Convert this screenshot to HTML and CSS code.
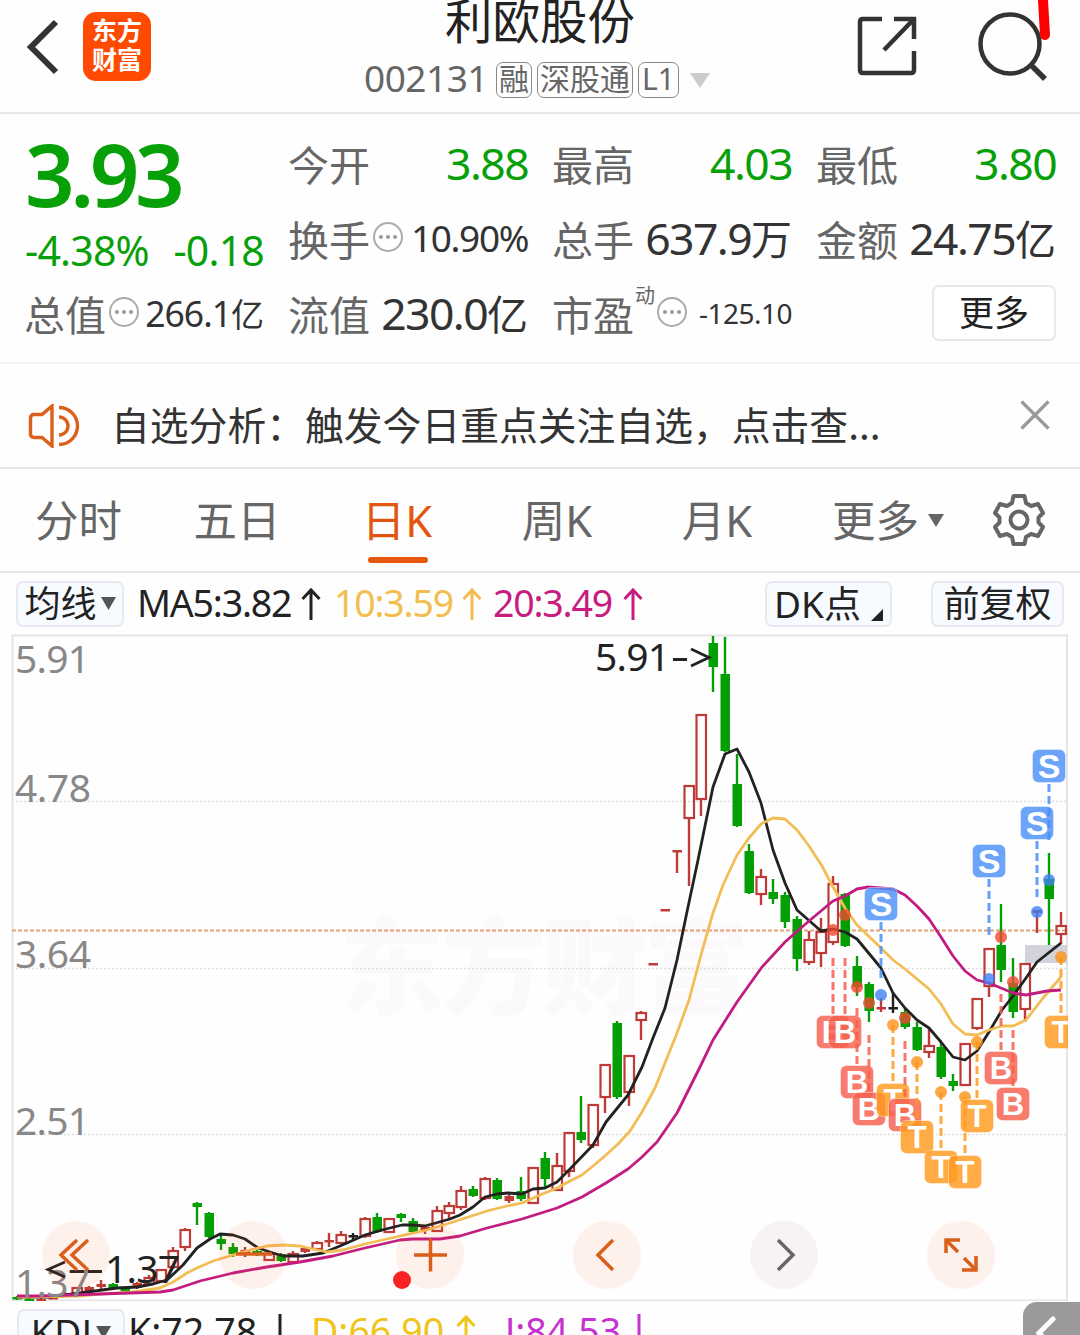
FILE: index.html
```
<!DOCTYPE html>
<html lang="zh-CN">
<head>
    <meta charset="UTF-8">
    <meta name="viewport" content="width=device-width, initial-scale=1.0">
    <title>利欧股份 002131</title>
    <link rel="stylesheet" href="styles.css">
    <script src="chart.js" defer></script>
</head>
<body>
    <div class="page">
        <!-- 顶部导航 -->
        <header class="header">
            <div class="header-left">
                <svg class="icon-back" width="34" height="58" viewBox="0 0 34 58"><path d="M30 4 5 29 30 54" fill="none" stroke="#333" stroke-width="6"/></svg>
                <div class="logo"><span>东方</span><span>财富</span></div>
            </div>
            <div class="header-title">
                <h1>利欧股份</h1>
                <div class="sub">
                    <span class="code">002131</span>
                    <span class="tag">融</span>
                    <span class="tag">深股通</span>
                    <span class="tag tag-l1">L1</span>
                    <svg class="sub-arrow" width="22" height="15" viewBox="0 0 22 15"><path d="M1 0H21L11 15Z" fill="#ccc"/></svg>
                </div>
            </div>
            <div class="header-right">
                <svg width="60" height="60" viewBox="0 0 60 60" fill="none" stroke="#333" stroke-width="4.5"><path d="M25 3H6Q3 3 3 6V54Q3 57 6 57H54Q57 57 57 54V35M37 3H57V23M57 3 27 34"/></svg>
                <svg width="72" height="72" viewBox="0 0 72 72" fill="none" stroke="#333" stroke-width="4.5"><circle cx="33" cy="34" r="29.5"/><path d="M54 55 68 69" stroke-width="5.5"/></svg>
            </div>
            <svg class="pen-mark" width="14" height="42" viewBox="0 0 14 42"><path d="M6 0 8 35" stroke="#f00" stroke-width="10" stroke-linecap="round"/></svg>
        </header>

        <!-- 行情 -->
        <section class="quote">
            <div class="price-box">
                <div class="price">3.93</div>
                <div class="change"><span>-4.38%</span><span>-0.18</span></div>
            </div>
            <div class="cell"><label>今开</label><b class="num down">3.88</b></div>
            <div class="cell"><label>最高</label><b class="num down">4.03</b></div>
            <div class="cell"><label>最低</label><b class="num down">3.80</b></div>
            <div class="cell"><label>换手</label><i class="info"></i><b class="num mid">10.90%</b></div>
            <div class="cell"><label>总手</label><b class="num">637.9<em>万</em></b></div>
            <div class="cell"><label>金额</label><b class="num">24.75<em>亿</em></b></div>
            <div class="cell"><label>总值</label><i class="info"></i><b class="num small">266.1<em>亿</em></b></div>
            <div class="cell"><label>流值</label><b class="num">230.0<em>亿</em></b></div>
            <div class="cell"><label>市盈</label><sup>动</sup><i class="info"></i><b class="num tiny">-125.10</b></div>
            <div class="cell cell-more"><button class="btn-more">更多</button></div>
        </section>

        <!-- 提示条 -->
        <section class="notice">
            <svg class="icon-speaker" width="52" height="44" viewBox="0 0 52 44" fill="none" stroke="#dd5f1c" stroke-width="3.4"><path d="M24 2V42L14 33.500H6Q2.500 33.500 2.500 30V14Q2.500 10.500 6 10.500H14Z"/><path d="M31 13A9 9 0 0 1 31 31M31 3.500A18.500 18.500 0 0 1 31 40.500"/></svg>
            <p>自选分析：触发今日重点关注自选，点击查...</p>
            <svg class="icon-close" width="30" height="30" viewBox="0 0 30 30"><path d="M1.500 1.500 28.500 28.500M28.500 1.500 1.500 28.500" stroke="#999" stroke-width="3.2"/></svg>
        </section>

        <!-- 周期 -->
        <nav class="tabs">
            <a class="tab">分时</a>
            <a class="tab">五日</a>
            <a class="tab active">日K</a>
            <a class="tab">周K</a>
            <a class="tab">月K</a>
            <a class="tab-more">更多<svg width="16" height="13" viewBox="0 0 16 13"><path d="M0 0H16L8 13Z" fill="#666"/></svg></a>
            <svg class="icon-gear" width="52" height="54" viewBox="0 0 52 54" fill="none" stroke="#666" stroke-width="4"><path d="M20.500 3H31.500L33 10 38 13 45 11 50 20 45.500 24.500V29.500L50 34 45 43 38 41 33 44 31.500 51H20.500L19 44 14 41 7 43 2 34 6.500 29.500V24.500L2 20 7 11 14 13 19 10Z" stroke-linejoin="round"/><circle cx="26" cy="27" r="8.500"/></svg>
        </nav>

        <!-- 均线 -->
        <div class="legend">
            <button class="chip chip-ma">均线<svg width="15" height="13" viewBox="0 0 15 13"><path d="M0 0H15L7.500 13Z" fill="#555"/></svg></button>
            <span class="ma ma5">MA5:3.82</span>
            <svg class="up" width="20" height="34" viewBox="0 0 20 34"><path d="M10 33V3M1.500 12 10 3 18.500 12" fill="none" stroke="#222" stroke-width="3"/></svg>
            <span class="ma ma10">10:3.59</span>
            <svg class="up" width="20" height="34" viewBox="0 0 20 34"><path d="M10 33V3M1.500 12 10 3 18.500 12" fill="none" stroke="#f3bd4f" stroke-width="3"/></svg>
            <span class="ma ma20">20:3.49</span>
            <svg class="up" width="20" height="34" viewBox="0 0 20 34"><path d="M10 33V3M1.500 12 10 3 18.500 12" fill="none" stroke="#c71d80" stroke-width="3"/></svg>
            <button class="chip chip-dk">DK点<svg width="12" height="12" viewBox="0 0 12 12"><path d="M12 0V12H0Z" fill="#222"/></svg></button>
            <button class="chip chip-fq">前复权</button>
        </div>

        <!-- K线图 -->
        <div class="chart">
            <svg id="kline" width="1080" height="667" viewBox="0 634 1080 667">
                <defs><clipPath id="frame"><rect x="12" y="634" width="1056" height="667"/></clipPath></defs>
                <text class="watermark" x="339" y="1006" textLength="410">东方财富</text>
                <g class="grid">
                    <path d="M12 801.500H1067M12 968.500H1067M12 1134.500H1067"/>
                </g>
                <rect class="border" x="12.500" y="635.500" width="1054.500" height="665"/>
                <path class="last-price" d="M12 930.500H1067"/>
                <rect x="1025" y="945" width="42" height="18" fill="#d2d2da"/>
                <g id="candles"></g>
                <g id="lines"></g>
                <g id="marks" clip-path="url(#frame)"></g>
                <g class="axis">
                    <text x="15" y="673" textLength="75">5.91</text>
                    <text x="15" y="802" textLength="76">4.78</text>
                    <text x="15" y="968" textLength="76">3.64</text>
                    <text x="15" y="1135" textLength="75">2.51</text>
                    <text x="15" y="1297" textLength="75">1.37</text>
                </g>
                <text class="peak" x="595" y="671" textLength="75">5.91</text>
                <path class="pointer" d="M673 659.500H687M691 649 709 657.500 691 666"/>
                <text class="peak" x="105" y="1283" textLength="75">1.37</text>
                <path class="pointer" d="M65 1262 48 1269.500 65 1277M70 1271.500H84M88 1271.500H102"/>
            </svg>
            <div class="tools">
                <span class="tool"><svg width="40" height="40" viewBox="0 0 40 40"><path d="M21 5 5 20 21 35M32 5 16 20 32 35"/></svg></span>
                <span class="tool"><svg width="40" height="40" viewBox="0 0 40 40"><path d="M3 19H39"/></svg></span>
                <span class="tool"><svg width="40" height="40" viewBox="0 0 40 40"><path d="M4 20H37M20.500 3.500V36.500"/></svg></span>
                <span class="tool"><svg width="40" height="40" viewBox="0 0 40 40"><path d="M26 5 11 20 26 35"/></svg></span>
                <span class="tool tool-off"><svg width="40" height="40" viewBox="0 0 40 40"><path d="M14 5 29 20 14 35"/></svg></span>
                <span class="tool"><svg width="40" height="40" viewBox="0 0 40 40"><path d="M5 18V5H19M5 5 17 17M35 21V35H21M35 35 23 23"/></svg></span>
            </div>
            <i class="red-dot"></i>
        </div>

        <!-- KDJ -->
        <div class="legend legend-kdj">
            <button class="chip chip-kdj">KDJ<svg width="15" height="13" viewBox="0 0 15 13"><path d="M0 0H15L7.500 13Z" fill="#555"/></svg></button>
            <span class="ma k">K:72.78</span>
            <svg class="up" width="20" height="34" viewBox="0 0 20 34"><path d="M10 0V31M1.500 23 10 31 18.500 23" fill="none" stroke="#222" stroke-width="3"/></svg>
            <span class="ma d">D:66.90</span>
            <svg class="up" width="20" height="34" viewBox="0 0 20 34"><path d="M10 33V3M1.500 12 10 3 18.500 12" fill="none" stroke="#f0c419" stroke-width="3"/></svg>
            <span class="ma j">J:84.53</span>
            <svg class="up" width="20" height="34" viewBox="0 0 20 34"><path d="M10 0V31M1.500 23 10 31 18.500 23" fill="none" stroke="#c532d0" stroke-width="3"/></svg>
            <span class="fold"><svg width="24" height="40" viewBox="0 0 24 40"><path d="M19 4 5 18 19 32" fill="none" stroke="#fff" stroke-width="5" stroke-linecap="round"/></svg></span>
        </div>
    </div>
</body>
</html>
```

FILE: styles.css
```
* {
    box-sizing: border-box;
}

body {
    margin: 0;
    background-color: #fefefe;
    font-family: "Noto Sans", "Noto Sans CJK SC", sans-serif;
    color: #333;
}

svg {
    display: block;
    flex: none;
}

.page {
    width: 1080px;
    height: 1335px;
    overflow: hidden;
}

button {
    font-family: inherit;
    padding: 0;
    color: #222;
}

/* 顶部导航 */
.header {
    position: relative;
    display: grid;
    grid-template-columns: 300px 1fr 300px;
    height: 114px;
    border-bottom: 2px solid #e7e6ec;
}

.header-left {
    display: flex;
    align-items: flex-start;
    padding: 12px 0 0 26px;
}

.icon-back {
    margin-top: 6px;
}

.logo {
    display: flex;
    flex-direction: column;
    align-items: center;
    justify-content: center;
    width: 68px;
    height: 69px;
    margin-left: 23px;
    padding-bottom: 3px;
    border-radius: 13px;
    background-color: #ff4a03;
    color: #fff;
    font-size: 25px;
    font-weight: 700;
    line-height: 29px;
}

.header-title {
    display: flex;
    flex-direction: column;
    align-items: center;
}

.header-title h1 {
    margin: -6px 0 0;
    font-size: 47.5px;
    font-weight: 400;
    line-height: 54px;
    color: #222;
}

.sub {
    display: flex;
    align-items: center;
    height: 36px;
    margin: 14px 5px 0 0;
    gap: 5px;
    color: #666;
}

.code {
    font-size: 37px;
    line-height: 36px;
    letter-spacing: -0.5px;
    margin: -4px 3px 0 0;
}

.tag {
    height: 36px;
    padding: 0 2px;
    border: 1.5px solid #888;
    border-radius: 7px;
    font-size: 30px;
    line-height: 32px;
}

.tag-l1 {
    width: 41px;
    text-align: center;
}

.sub-arrow {
    margin-left: 5px;
}

.header-right {
    display: flex;
    align-items: flex-start;
    gap: 60px;
    padding: 16px 0 0 77px;
}

.header-right svg + svg {
    margin-top: -6px;
}

.pen-mark {
    position: absolute;
    left: 1037px;
    top: 0;
}

/* 行情 */
.quote {
    display: grid;
    grid-template-columns: repeat(4, 239px);
    grid-template-rows: repeat(3, 75px);
    column-gap: 25px;
    height: 250px;
    padding: 11px 25px 0;
    border-bottom: 2px solid #f4f4f4;
}

.price-box {
    grid-row: span 2;
    color: #08a008;
}

.price {
    font-size: 87px;
    font-weight: 600;
    line-height: 97px;
    letter-spacing: -4.5px;
}

.change {
    display: flex;
    justify-content: space-between;
    font-size: 41px;
    line-height: 56px;
    letter-spacing: -0.8px;
}

.cell {
    display: flex;
    align-items: center;
    height: 75px;
    white-space: nowrap;
}

.cell label {
    margin-left: -1px;
    font-size: 41px;
    color: #666;
}

.cell sup {
    align-self: flex-start;
    font-size: 20px;
    line-height: 20px;
    margin: 11px -1px 0 1px;
    color: #666;
}

.info {
    display: flex;
    align-items: center;
    justify-content: center;
    width: 30px;
    height: 30px;
    margin: 0 0 2px 3px;
    border: 2.5px solid #aaa;
    border-radius: 50%;
}

.info::after {
    content: "";
    width: 4px;
    height: 4px;
    border-radius: 50%;
    background-color: #999;
    box-shadow: -7px 0 #999, 7px 0 #999;
}

.num {
    margin-left: auto;
    font-size: 44.5px;
    font-weight: 400;
    letter-spacing: -1.6px;
}

.num em {
    font-style: normal;
    font-size: 41px;
    letter-spacing: 0;
}

.num.down {
    color: #08a008;
}

.num.mid {
    font-size: 37px;
    letter-spacing: -1.4px;
}

.num.small {
    font-size: 35.5px;
    letter-spacing: -1px;
}

.num.small em {
    font-size: 33px;
}

.num.tiny {
    font-size: 28px;
    letter-spacing: -0.5px;
}

.cell-more {
    justify-content: flex-end;
}

.btn-more {
    width: 124px;
    height: 56px;
    margin-top: 0;
    border: 2px solid #e8e8ec;
    border-radius: 7px;
    background-color: #fff;
    font-size: 35px;
    line-height: 50px;
}

/* 提示条 */
.notice {
    display: flex;
    align-items: center;
    height: 105px;
    padding: 20px 30px 0 28px;
    border-bottom: 2px solid #e6e6e6;
}

.notice p {
    flex: 1;
    margin: -5px 0 0 31px;
    font-family: "Noto Sans CJK SC", sans-serif;
    font-size: 38.8px;
    white-space: nowrap;
}

.icon-close {
    margin-bottom: 22px;
}

/* 周期 */
.tabs {
    display: flex;
    align-items: center;
    height: 104px;
    border-bottom: 2px solid #e6e6e6;
    font-size: 43.5px;
    color: #666;
}

.tab {
    position: relative;
    width: 160px;
    line-height: 102px;
    text-align: center;
}

.tab:first-child {
    width: 157px;
}

.tab.active {
    color: #e2570e;
}

.tab.active::after {
    content: "";
    position: absolute;
    left: 51px;
    bottom: 8px;
    width: 60px;
    height: 6px;
    border-radius: 3px;
    background-color: #e8580c;
}

.tab-more {
    display: flex;
    align-items: center;
    margin-left: 35px;
    gap: 9px;
    line-height: 102px;
}

.icon-gear {
    margin-left: 49px;
}

/* 均线 */
.legend {
    display: flex;
    align-items: center;
    height: 61px;
    padding: 0 16px;
    font-size: 37.5px;
}

.chip {
    display: flex;
    align-items: center;
    justify-content: center;
    height: 46px;
    border: 2px solid #e7e9f0;
    border-radius: 7px;
    background-color: #f7faff;
    font-size: 36px;
    line-height: 40px;
}

.chip-ma,
.chip-kdj {
    width: 108px;
    gap: 4px;
}

.chip-dk {
    width: 127px;
    margin-left: auto;
    font-size: 37px;
}

.chip-dk svg {
    align-self: flex-end;
    margin: 0 0 4px 10px;
}

.chip-fq {
    width: 133px;
    margin-left: 39px;
}

.ma {
    white-space: nowrap;
    margin-top: -2px;
    letter-spacing: -1.2px;
}

.ma5 {
    width: 164px;
    margin-left: 13px;
    color: #222;
}

.ma10 {
    width: 128px;
    margin-left: 13px;
    color: #f3bd4f;
}

.ma20 {
    width: 130px;
    margin-left: 11px;
    color: #c71d80;
}

/* K线图 */
.chart {
    position: relative;
    height: 667px;
}

.watermark {
    font-size: 105px;
    font-weight: 900;
    fill: #fcf9fd;
}

.grid path {
    stroke: #ddd;
    stroke-width: 1.5;
    stroke-dasharray: 2 2;
}

.border {
    fill: none;
    stroke: #e4e4e4;
    stroke-width: 2;
}

.last-price {
    stroke: #e3a27b;
    stroke-width: 2;
    stroke-dasharray: 4 2;
}

.axis text {
    font-size: 39px;
    fill: #888;
}

.peak {
    font-size: 39px;
    fill: #222;
}

.pointer {
    fill: none;
    stroke: #222;
    stroke-width: 2.8;
}

.badge {
    font-family: "Liberation Sans", sans-serif;
    font-size: 34px;
    font-weight: 700;
    fill: #fff;
    text-anchor: middle;
}

.badge-b,
.badge-t {
    font-size: 31px;
}

.tools {
    position: absolute;
    left: 42px;
    top: 587px;
    display: flex;
    gap: 109px;
}

.tool {
    display: flex;
    align-items: center;
    justify-content: center;
    width: 68px;
    height: 68px;
    border-radius: 50%;
    background-color: rgba(250, 90, 20, 0.08);
}

.tool path {
    fill: none;
    stroke: #d95f1b;
    stroke-width: 3.5;
}

.tool-off {
    background-color: #f6f2f6;
}

.tool-off path {
    stroke: #666;
}

.red-dot {
    position: absolute;
    left: 393px;
    top: 637px;
    width: 18px;
    height: 18px;
    border-radius: 50%;
    background-color: #f52323;
}

/* KDJ */
.legend-kdj {
    position: relative;
    height: 60px;
}

.chip-kdj {
    margin: 2px 0 0 1px;
    font-size: 37px;
    letter-spacing: 0.5px;
}

.legend-kdj .ma {
    letter-spacing: 0;
}

.k {
    width: 142px;
    margin-left: 3px;
    color: #222;
}

.d {
    width: 145px;
    margin-left: 21px;
    color: #f0c419;
}

.j {
    width: 124px;
    margin-left: 29px;
    color: #c532d0;
}

.fold {
    position: absolute;
    right: 0;
    top: 1px;
    width: 57px;
    height: 80px;
    padding: 13px 0 0 11px;
    border-radius: 14px 0 0 14px;
    background-color: #9b999c;
}
```

FILE: chart.js
```
const STEP = 12;
const START = 17;
const RED = '#bf3b38';
const GREEN = '#049f04';
const BLACK = '#222';

// [color, high, bodyTop, bodyBottom, low]
const candles = [
    ['g', 1296, 1297, 1299, 1300], ['g', 1298, 1299, 1301, 1301], ['r', 1298, 1299, 1300, 1301], ['r', 1296, 1297, 1299, 1299],
    ['r', 1292, 1293, 1296, 1297], ['r', 1287, 1288, 1294, 1295], ['r', 1286, 1287, 1292, 1293], ['r', 1280, 1284, 1287, 1290],
    ['g', 1283, 1284, 1288, 1289], ['g', 1287, 1288, 1291, 1292], ['r', 1282, 1283, 1288, 1289], ['r', 1275, 1278, 1284, 1285],
    ['r', 1269, 1270, 1281, 1282], ['r', 1247, 1251, 1267, 1269], ['r', 1228, 1230, 1247, 1251], ['g', 1202, 1203, 1207, 1225],
    ['g', 1212, 1213, 1237, 1238], ['g', 1234, 1239, 1244, 1250], ['g', 1243, 1247, 1254, 1257], ['r', 1247, 1250, 1255, 1257],
    ['g', 1250, 1251, 1255, 1256], ['r', 1253, 1254, 1260, 1261], ['g', 1253, 1254, 1261, 1262], ['r', 1251, 1254, 1262, 1264],
    ['r', 1247, 1248, 1252, 1253], ['r', 1241, 1243, 1249, 1250], ['r', 1233, 1240, 1242, 1247], ['r', 1231, 1235, 1243, 1244],
    ['k', 1233, 1235, 1237, 1240], ['r', 1217, 1219, 1236, 1238], ['g', 1213, 1217, 1232, 1233], ['r', 1218, 1219, 1232, 1233],
    ['g', 1213, 1214, 1218, 1222], ['g', 1218, 1221, 1232, 1233], ['r', 1226, 1227, 1230, 1234], ['r', 1206, 1211, 1231, 1232],
    ['r', 1202, 1206, 1213, 1219], ['r', 1186, 1191, 1207, 1210], ['g', 1186, 1189, 1196, 1197], ['r', 1177, 1179, 1198, 1200],
    ['g', 1178, 1180, 1199, 1200], ['r', 1192, 1196, 1201, 1203], ['g', 1177, 1191, 1199, 1201], ['r', 1167, 1168, 1203, 1204],
    ['g', 1152, 1158, 1179, 1188], ['r', 1153, 1166, 1190, 1191], ['r', 1132, 1133, 1171, 1177], ['g', 1096, 1132, 1140, 1143],
    ['r', 1104, 1105, 1145, 1148], ['r', 1064, 1065, 1097, 1113], ['g', 1021, 1023, 1097, 1099], ['r', 1055, 1056, 1092, 1106],
    ['r', 1011, 1013, 1020, 1040], ['r', 963, 963, 965, 965], ['r', 909, 909, 911, 911], ['r', 850, 850, 852, 873],
    ['r', 785, 786, 818, 886], ['r', 714, 715, 799, 816], ['g', 636, 643, 667, 692], ['g', 637, 674, 751, 752],
    ['g', 754, 784, 826, 827], ['g', 844, 851, 893, 894], ['r', 869, 877, 894, 905], ['g', 879, 892, 899, 904],
    ['g', 892, 895, 922, 928], ['g', 916, 919, 959, 971], ['r', 931, 940, 962, 965], ['r', 918, 932, 953, 967],
    ['r', 876, 884, 942, 945], ['g', 893, 894, 946, 947], ['g', 956, 966, 987, 996], ['g', 982, 984, 1011, 1022],
    ['r', 998, 1007, 1009, 1012], ['k', 992, 1007, 1009, 1013], ['g', 1008, 1012, 1027, 1029], ['g', 1022, 1027, 1050, 1051],
    ['r', 1029, 1046, 1052, 1058], ['g', 1042, 1047, 1077, 1079], ['g', 1074, 1081, 1086, 1091], ['r', 1043, 1044, 1085, 1086],
    ['r', 998, 999, 1028, 1030], ['r', 948, 949, 986, 997], ['g', 904, 945, 970, 982], ['g', 958, 983, 1012, 1018],
    ['r', 963, 964, 1009, 1022], ['r', 910, 910, 913, 933], ['g', 853, 879, 899, 945], ['r', 912, 926, 934, 944]
];

const ma5 = '17,1297 50,1297 80,1293 117,1288 137,1287 153,1284 167,1280 183,1265 197,1248 210,1239 220,1234 233,1235 245,1239 258,1248 270,1252 283,1256 303,1256 323,1253 340,1246 365,1235 382,1230 402,1225 412,1225 425,1226 450,1219 460,1215 473,1207 485,1197 497,1194 508,1193 522,1194 533,1189 545,1188 557,1182 570,1169 593,1145 606,1122 628,1095 642,1067 653,1038 665,1008 677,960 688,907 698,860 713,787 725,754 737,749 749,772 761,803 773,850 785,883 797,910 821,931 833,929 845,932 857,939 881,968 893,993 905,1008 917,1020 929,1028 941,1042 953,1057 965,1060 977,1051 989,1032 1002,1010 1013,996 1026,978 1037,962 1061,943';
const ma10 = '17,1297 80,1296 100,1294 133,1292 160,1288 173,1282 187,1273 197,1268 213,1261 233,1255 250,1250 267,1246 283,1245 300,1246 313,1249 327,1252 343,1250 365,1244 400,1236 427,1230 450,1223 487,1211 507,1206 522,1203 540,1195 557,1188 570,1181 582,1175 593,1166 606,1155 618,1144 630,1131 642,1112 655,1088 665,1063 677,1033 689,1000 701,955 713,913 723,885 737,855 749,838 761,824 773,818 785,819 797,830 809,846 822,866 833,887 845,908 857,925 881,948 893,960 905,969 929,989 941,1004 953,1024 965,1034 977,1035 989,1030 1002,1026 1013,1026 1026,1020 1043,998 1061,977';
const ma20 = '17,1296 40,1296 100,1294 160,1292 173,1290 200,1281 233,1273 267,1267 300,1262 333,1256 365,1248 400,1240 413,1239 440,1239 460,1236 487,1228 522,1219 557,1208 582,1197 606,1183 628,1169 642,1157 657,1142 677,1113 688,1091 700,1067 713,1040 737,1002 762,967 785,942 809,921 833,901 845,896 857,889 868,887 893,889 905,895 918,907 929,919 941,937 953,956 965,971 977,980 989,983 1013,993 1026,995 1047,991 1061,990';

// [type, x, dotY, badgeY]
const marks = [
    ['S', 881, 995, 904], ['S', 989, 979, 861], ['S', 1037, 912, 823], ['S', 1049, 880, 766],
    ['B', 833, 930, 1032], ['B', 845, 915, 1032], ['B', 857, 987, 1082], ['B', 869, 1003, 1109],
    ['T', 893, 1025, 1100], ['B', 905, 1018, 1115], ['T', 917, 1062, 1137], ['T', 941, 1092, 1167],
    ['T', 965, 1097, 1172], ['T', 977, 1042, 1116], ['B', 1001, 937, 1068], ['B', 1013, 982, 1104],
    ['T', 1061, 957, 1032]
];
const markColors = { S: '#4a90f8', B: '#f75f4e', T: '#ff9a1f' };
const dotColors = { S: '#3d7ff5', B: '#f0492f', T: '#fb9417' };

function drawCandles() {
    let html = '';
    candles.forEach(([type, high, top, bottom, low], i) => {
        const x = START + i * STEP;
        const color = { r: RED, g: GREEN, k: BLACK }[type];
        const hollow = type === 'r' && bottom - top > 5;
        html += `<path d="M${x} ${high}V${top}M${x} ${bottom}V${low}" stroke="${color}" stroke-width="2.4"/>`;
        if (hollow) {
            html += `<rect x="${x - 4.5}" y="${top}" width="9.500" height="${bottom - top}" fill="none" stroke="${color}" stroke-width="2.2"/>`;
        } else {
            html += `<rect x="${x - 4.5}" y="${top}" width="9.500" height="${Math.max(bottom - top, 2.5)}" fill="${color}"/>`;
        }
    });
    document.getElementById('candles').innerHTML = html;
}

function drawLines() {
    document.getElementById('lines').innerHTML = [[ma5, '#222'], [ma10, '#f3bd55'], [ma20, '#c31c80']]
        .map(([points, color]) => `<polyline points="${points}" fill="none" stroke="${color}" stroke-width="2.8" stroke-linejoin="round"/>`)
        .join('');
}

function drawMarks() {
    let html = '';
    marks.forEach(([type, x, dotY, badgeY]) => {
        const color = markColors[type];
        let from = badgeY - 74;
        let to = badgeY - 17;
        if (type === 'S') {
            from = badgeY + 18;
            to = badgeY + 75;
        } else if (type === 'T') {
            from = dotY;
        }
        html += `<path d="M${x} ${from}V${to}" stroke="${color}" stroke-opacity="0.85" stroke-width="3" stroke-dasharray="8 4"/>`;
        html += `<circle cx="${x}" cy="${dotY}" r="6" fill="${dotColors[type]}" fill-opacity="0.8"/>`;
        html += `<rect x="${x - 16.5}" y="${badgeY - 16.5}" width="33" height="33" rx="6" fill="${color}" fill-opacity="0.82" stroke="#fff" stroke-opacity="0.4"/>`;
        html += `<text class="badge badge-${type.toLowerCase()}" x="${x}" y="${badgeY + (type === 'S' ? 12 : 11)}">${type}</text>`;
    });
    document.getElementById('marks').innerHTML = html;
}

drawCandles();
drawLines();
drawMarks();
```
